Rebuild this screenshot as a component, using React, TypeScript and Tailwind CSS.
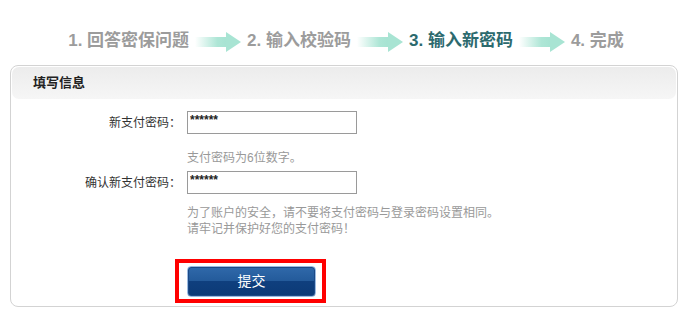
const steps = [
  { label: "1. 回答密保问题", active: false },
  { label: "2. 输入校验码", active: false },
  { label: "3. 输入新密码", active: true },
  { label: "4. 完成", active: false },
];

function StepArrow() {
  return (
    <svg width="46" height="20" viewBox="0 0 46 20" className="mx-[6px] mt-[3px] shrink-0">
      <defs>
        <linearGradient id="arrowFade" x1="0" x2="1" y1="0" y2="0">
          <stop offset="0" stopColor="#ffffff" />
          <stop offset="0.7" stopColor="#aee6d6" />
          <stop offset="1" stopColor="#a6e3d2" />
        </linearGradient>
      </defs>
      <rect x="0" y="5" width="32" height="10" fill="url(#arrowFade)" />
      <polygon points="31,0 46,10 31,20" fill="#a8e4d3" />
    </svg>
  );
}

function PwdField({ label }: { label: string }) {
  return (
    <div className="flex items-center">
      <label className="w-[170px] shrink-0 text-right text-[12px] text-[#333]">{label}</label>
      <input
        type="text"
        readOnly
        value="******"
        className="ml-[6px] h-[23px] w-[170px] border border-[#9a9a9a] bg-white px-[2px] pb-[5px] text-[12px] font-bold leading-none text-[#222] outline-none"
      />
    </div>
  );
}

export default function App() {
  return (
    <div
      className="h-[310px] w-[692px] bg-white"
      style={{ fontFamily: '"Liberation Sans", "Noto Sans CJK SC", sans-serif' }}
    >
      <div className="flex h-[65px] items-center justify-center pt-[16px]">
        {steps.map((s, i) => (
          <div key={s.label} className="flex items-center">
            <span
              className={
                "whitespace-nowrap text-[17px] font-bold " +
                (s.active ? "text-[#2c6a6e]" : "text-[#9c9c9c]")
              }
            >
              {s.label}
            </span>
            {i < steps.length - 1 && <StepArrow />}
          </div>
        ))}
      </div>

      <div className="mx-[10px] h-[242px] w-[668px] rounded-[8px] border border-[#d3d3d3]">
        <div className="m-px flex h-[32px] items-center rounded-[7px] bg-[linear-gradient(to_bottom,#ececec,#f6f6f6)] pl-[21px]">
          <h2 className="text-[13px] font-bold text-[#222]">填写信息</h2>
        </div>

        <div className="pt-[11px]">
          <PwdField label="新支付密码：" />
          <p className="mt-[16px] ml-[176px] text-[12px] leading-[16px] text-[#999]">支付密码为6位数字。</p>
          <div className="mt-[5px]">
            <PwdField label="确认新支付密码：" />
          </div>
          <div className="mt-[11px] ml-[176px] text-[12px] leading-[16px] text-[#999]">
            <p>为了账户的安全，请不要将支付密码与登录密码设置相同。</p>
            <p>请牢记并保护好您的支付密码！</p>
          </div>
          <div className="mt-[22px] ml-[164px] flex h-[44px] w-[151px] items-center border-4 border-[#ff0000] pl-[8px]">
            <button
              type="button"
              className="h-[31px] w-[129px] rounded-[4px] border border-[#9bbbe2] bg-[linear-gradient(to_bottom,#3069aa_0%,#235a9a_50%,#0f3f7e_50%,#0c3a76_100%)] text-[14px] text-white shadow-[inset_0_0_0_1px_#1c4a86]"
            >
              提交
            </button>
          </div>
        </div>
      </div>
    </div>
  );
}
